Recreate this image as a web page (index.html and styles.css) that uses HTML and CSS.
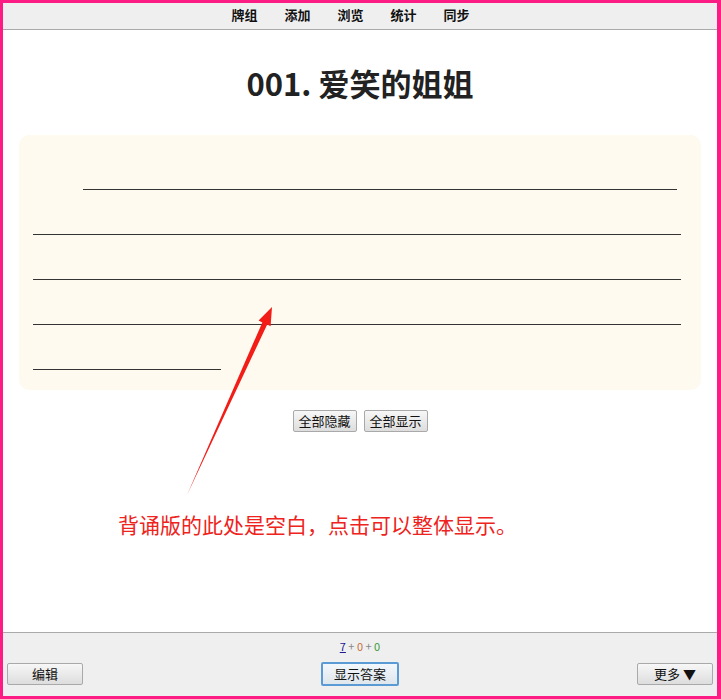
FILE: index.html
```html
<!DOCTYPE html>
<html lang="zh-CN">

<head>
    <meta charset="UTF-8">
    <meta name="viewport" content="width=device-width, initial-scale=1.0">
    <title>爱笑的姐姐</title>
    <link rel="stylesheet" href="styles.css">
</head>

<body>
    <div class="page">
        <div class="topbar">
            <a class="nav">牌组</a>
            <a class="nav">添加</a>
            <a class="nav">浏览</a>
            <a class="nav">统计</a>
            <a class="nav">同步</a>
        </div>

        <div class="main">
            <h1 class="title">001. 爱笑的姐姐</h1>

            <div class="card">
                <div class="blank first"></div>
                <div class="blank"></div>
                <div class="blank"></div>
                <div class="blank"></div>
                <div class="blank short"></div>
            </div>

            <div class="toggles">
                <button class="btn">全部隐藏</button>
                <button class="btn">全部显示</button>
            </div>

            <p class="note">背诵版的此处是空白，点击可以整体显示。</p>
        </div>

        <div class="bottombar">
            <div class="counts">
                <u class="new">7</u> + <span class="learn">0</span> + <span class="review">0</span>
            </div>
            <div class="actions">
                <button class="btn wide">编辑</button>
                <button class="btn answer">显示答案</button>
                <button class="btn wide">更多 ▼</button>
            </div>
        </div>

        <!-- annotation arrow, drawn over the card -->
        <svg class="arrow" width="100" height="200" viewBox="180 300 100 200">
            <polygon fill="#f21d16"
                points="187,495 262.3,322.4 258.6,320.5 272,307 270.6,326.2 267.2,324.4" />
        </svg>
    </div>
</body>

</html>
```

FILE: styles.css
```css
* {
    box-sizing: border-box;
}

body {
    margin: 0;
    font-family: "Noto Sans CJK SC", "Noto Sans", sans-serif;
    color: #222;
}

.page {
    position: relative;
    height: 699px;
    border-style: solid;
    border-color: #fd1c84;
    border-width: 3px 4px 3px 3px;
    display: flex;
    flex-direction: column;
    background-color: #fff;
}

.topbar {
    height: 27px;
    background-color: #efefef;
    border-bottom: 1px solid #aaa;
    display: flex;
    justify-content: center;
    align-items: center;
    gap: 27px;
    padding-right: 19px;
    padding-bottom: 3px;
}

.nav {
    font-size: 13px;
    font-weight: bold;
    color: #111;
    line-height: 16px;
}

.main {
    flex: 1;
    padding-top: 33px;
}

.title {
    margin: 0;
    height: 40px;
    font-size: 31px;
    line-height: 40px;
    text-align: center;
    font-weight: bold;
    color: #222;
}

.card {
    margin: 32px 16px 0;
    height: 255px;
    padding: 10px 20px 20px 14px;
    background-color: #fefaef;
    border-radius: 10px;
}

.blank {
    height: 45px;
    border-bottom: 1px solid #333;
}

.blank.first {
    margin-left: 50px;
    margin-right: 4px;
}

.blank.short {
    width: 188px;
}

.toggles {
    margin-top: 20px;
    display: flex;
    justify-content: center;
    gap: 7px;
}

.btn {
    height: 22px;
    padding: 0;
    font-family: "Noto Sans CJK SC", sans-serif;
    font-size: 13px;
    line-height: 18px;
    color: #111;
    background: linear-gradient(#f7f7f7, #dddddd);
    border: 1px solid #a9a9a9;
    border-radius: 2px;
}

.toggles .btn {
    width: 64px;
}

.note {
    margin: 77px 0 0 115px;
    font-size: 21px;
    line-height: 30px;
    color: #ee2320;
}

.bottombar {
    height: 64px;
    border-top: 1px solid #aaa;
    background-color: #efefef;
    padding: 6px 4px 0;
}

.counts {
    text-align: center;
    font-size: 11px;
    line-height: 14px;
    color: #888;
}

.new {
    color: #1a1a90;
}

.learn {
    color: #c8703f;
}

.review {
    color: #3c9a3c;
}

.actions {
    margin-top: 9px;
    display: flex;
    justify-content: space-between;
    align-items: center;
}

.btn.wide {
    width: 76px;
}

.btn.answer {
    width: 78px;
    height: 24px;
    border: 2px solid #5b9bd5;
    background: linear-gradient(#f2f7fb, #dfe6ec);
}

.arrow {
    position: absolute;
    left: 177px;
    top: 297px;
}
```
